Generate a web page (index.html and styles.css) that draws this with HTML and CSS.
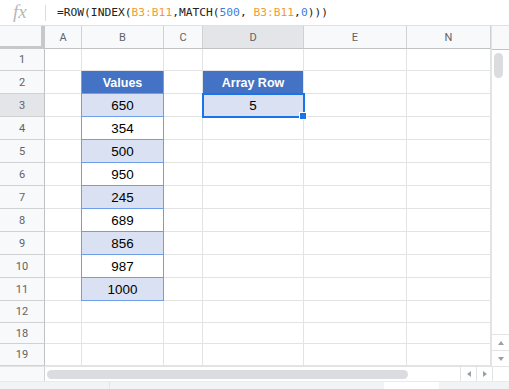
FILE: index.html
```html
<!DOCTYPE html>
<html>
<head>
<meta charset="utf-8">
<link rel="stylesheet" href="styles.css">
<title>ROW INDEX MATCH</title>
</head>
<body>
<div class="formula">
  <span class="fx">fx</span>
  <span class="sep"></span>
  <span class="expr">=ROW(INDEX(<span class="rng">B3:B11</span>,MATCH(<span class="num">500</span>, <span class="rng">B3:B11</span>,<span class="num">0</span>)))</span>
</div>
<div class="sheet">
  <div class="grid">
    <div class="corner"></div>
    <div class="colh">A</div>
    <div class="colh">B</div>
    <div class="colh">C</div>
    <div class="colh sel">D</div>
    <div class="colh">E</div>
    <div class="colh">N</div>

    <div class="rowh">1</div><div class="c"></div><div class="c"></div><div class="c"></div><div class="c"></div><div class="c"></div><div class="c"></div>
    <div class="rowh">2</div><div class="c"></div><div class="c hd first">Values</div><div class="c"></div><div class="c hd">Array Row</div><div class="c"></div><div class="c"></div>
    <div class="rowh sel">3</div><div class="c"></div><div class="c v fill">650</div><div class="c"></div><div class="c fill active">5</div><div class="c"></div><div class="c"></div>
    <div class="rowh">4</div><div class="c"></div><div class="c v">354</div><div class="c"></div><div class="c"></div><div class="c"></div><div class="c"></div>
    <div class="rowh">5</div><div class="c"></div><div class="c v fill">500</div><div class="c"></div><div class="c"></div><div class="c"></div><div class="c"></div>
    <div class="rowh">6</div><div class="c"></div><div class="c v">950</div><div class="c"></div><div class="c"></div><div class="c"></div><div class="c"></div>
    <div class="rowh">7</div><div class="c"></div><div class="c v fill">245</div><div class="c"></div><div class="c"></div><div class="c"></div><div class="c"></div>
    <div class="rowh">8</div><div class="c"></div><div class="c v">689</div><div class="c"></div><div class="c"></div><div class="c"></div><div class="c"></div>
    <div class="rowh">9</div><div class="c"></div><div class="c v fill">856</div><div class="c"></div><div class="c"></div><div class="c"></div><div class="c"></div>
    <div class="rowh">10</div><div class="c"></div><div class="c v">987</div><div class="c"></div><div class="c"></div><div class="c"></div><div class="c"></div>
    <div class="rowh">11</div><div class="c"></div><div class="c v fill">1000</div><div class="c"></div><div class="c"></div><div class="c"></div><div class="c"></div>
    <div class="rowh">12</div><div class="c"></div><div class="c"></div><div class="c"></div><div class="c"></div><div class="c"></div><div class="c"></div>
    <div class="rowh">18</div><div class="c"></div><div class="c"></div><div class="c"></div><div class="c"></div><div class="c"></div><div class="c"></div>
    <div class="rowh">19</div><div class="c"></div><div class="c"></div><div class="c"></div><div class="c"></div><div class="c"></div><div class="c"></div>
  </div>
  <div class="vscroll">
    <div class="vhead"></div>
    <div class="vtrack"><div class="vthumb"></div></div>
    <div class="vbtn"><span class="tri up"></span></div>
    <div class="vbtn"><span class="tri down"></span></div>
  </div>
</div>
<div class="hscroll">
  <div class="hleft"></div>
  <div class="htrack"><div class="hthumb"></div></div>
  <div class="hbtn"><span class="tri left"></span></div>
  <div class="hbtn"><span class="tri right"></span></div>
  <div class="hcorner"></div>
</div>
<div class="tabs">
  <div class="tabgap"></div>
  <div class="tab"></div>
</div>
</body>
</html>
```

FILE: styles.css
```css
html, body {
  margin: 0;
  background: white;
  overflow: hidden;
}
body {
  width: 509px;
  height: 389px;
  font-family: "Liberation Sans", Arial, sans-serif;
}

/* formula bar */
.formula {
  height: 25px;
  border-bottom: 1px solid #e0e0e0;
  display: flex;
  align-items: center;
  box-sizing: content-box;
}
.fx {
  font-family: "Liberation Serif", serif;
  font-style: italic;
  font-size: 19px;
  color: #b8b8b8;
  width: 19px;
  margin-left: 13px;
  line-height: 1;
  margin-top: -3px;
}
.sep {
  width: 1px;
  height: 16px;
  background: #dadce0;
  margin-left: 13px;
}
.expr {
  margin-left: 11px;
  font-family: "DejaVu Sans Mono", "Liberation Mono", monospace;
  font-size: 11.25px;
  color: #222;
  white-space: pre;
}
.rng { color: #f29b34; }
.num { color: #3b7ddd; }

/* grid */
.sheet {
  display: flex;
}
.grid {
  display: grid;
  grid-template-columns: 45px 37px 82px 39px 101px 103px 84px;
  grid-template-rows: 23px 22px repeat(10, 23px) 22px 21px 22px;
  width: 491px;
}
.grid > div {
  box-sizing: border-box;
  border-right: 1px solid #e2e3e3;
  border-bottom: 1px solid #e2e3e3;
  display: flex;
  align-items: center;
  justify-content: center;
}
.corner {
  background: #f8f9fa;
  border-right: 4px solid #c7c8ca !important;
  border-bottom: 3px solid #c7c8ca !important;
}
.colh {
  background: #f8f9fa;
  color: #5f6368;
  font-family: Roboto, "Liberation Sans", sans-serif;
  font-size: 11px;
  border-right-color: #cfd1d3 !important;
  border-bottom-color: #c0c2c4 !important;
}
.rowh {
  background: #f8f9fa;
  color: #5f6368;
  font-family: Roboto, "Liberation Sans", sans-serif;
  font-size: 11px;
  border-right-color: #c0c2c4 !important;
  border-bottom-color: #cfd1d3 !important;
}
.colh.sel, .rowh.sel {
  background: #e3e5e8;
}
.c {
  font-size: 13.4px;
  color: #000;
  padding-top: 1px;
}
.hd {
  background: #4472c4;
  color: white;
  font-weight: bold;
  font-size: 12.5px;
}
.v {
  border-right-color: #6d9eea !important;
  border-bottom-color: #6d9eea !important;
  box-shadow: -1px 0 0 #6d9eea;
}
.hd.first {
  border-right-color: #6d9eea !important;
  border-bottom-color: #6d9eea !important;
  box-shadow: -1px 0 0 #6d9eea;
}
.fill {
  background: #d9e1f2;
}
.active {
  position: relative;
  outline: 2px solid #1a73e8;
  outline-offset: -1px;
}
.active::after {
  content: "";
  position: absolute;
  right: -4px;
  bottom: -4px;
  width: 6px;
  height: 6px;
  background: #1a73e8;
  border: 1px solid white;
  z-index: 2;
}

/* vertical scrollbar */
.vscroll {
  width: 18px;
  display: flex;
  flex-direction: column;
  border-left: 1px solid #e2e3e3;
  box-sizing: border-box;
}
.vhead {
  height: 23px;
  background: #f8f9fa;
  border-bottom: 1px solid #c0c2c4;
}
.vtrack {
  flex: 1;
  padding: 3px 0 0 2px;
}
.vthumb {
  width: 9px;
  height: 25px;
  border-radius: 5px;
  background: #dadce0;
}
.vbtn {
  height: 15px;
  border-top: 1px solid #e2e3e3;
  display: flex;
  align-items: center;
  justify-content: center;
}

/* horizontal scrollbar */
.hscroll {
  height: 14px;
  display: flex;
  border-top: 1px solid #e2e3e3;
}
.hleft {
  width: 45px;
  background: #f8f9fa;
  border-right: 1px solid #d0d2d4;
  box-sizing: border-box;
}
.htrack {
  width: 415px;
  padding: 3px 0 0 2px;
  box-sizing: border-box;
}
.hthumb {
  width: 361px;
  height: 9px;
  border-radius: 5px;
  background: #dadce0;
}
.hbtn {
  width: 15px;
  border-left: 1px solid #e2e3e3;
  display: flex;
  align-items: center;
  justify-content: center;
}
.hcorner {
  flex: 1;
  border-left: 1px solid #e2e3e3;
}

.tri {
  width: 0;
  height: 0;
  border: 3px solid transparent;
}
.tri.up { border-bottom: 4px solid #9aa0a6; border-top-width: 0; }
.tri.down { border-top: 4px solid #9aa0a6; border-bottom-width: 0; }
.tri.left { border-right: 4px solid #9aa0a6; border-left-width: 0; }
.tri.right { border-left: 4px solid #9aa0a6; border-right-width: 0; }

/* sheet tabs strip */
.tabs {
  height: 9px;
  background: #f1f3f4;
  display: flex;
  border-top: 1px solid #e8eaed;
}
.tabgap {
  width: 383px;
  border-right: 1px solid #f1f3f4;
  background: linear-gradient(90deg, transparent 109px, #e3e5e8 109px, #e3e5e8 110px, transparent 110px);
}
.tab {
  width: 55px;
  background: white;
}
```
